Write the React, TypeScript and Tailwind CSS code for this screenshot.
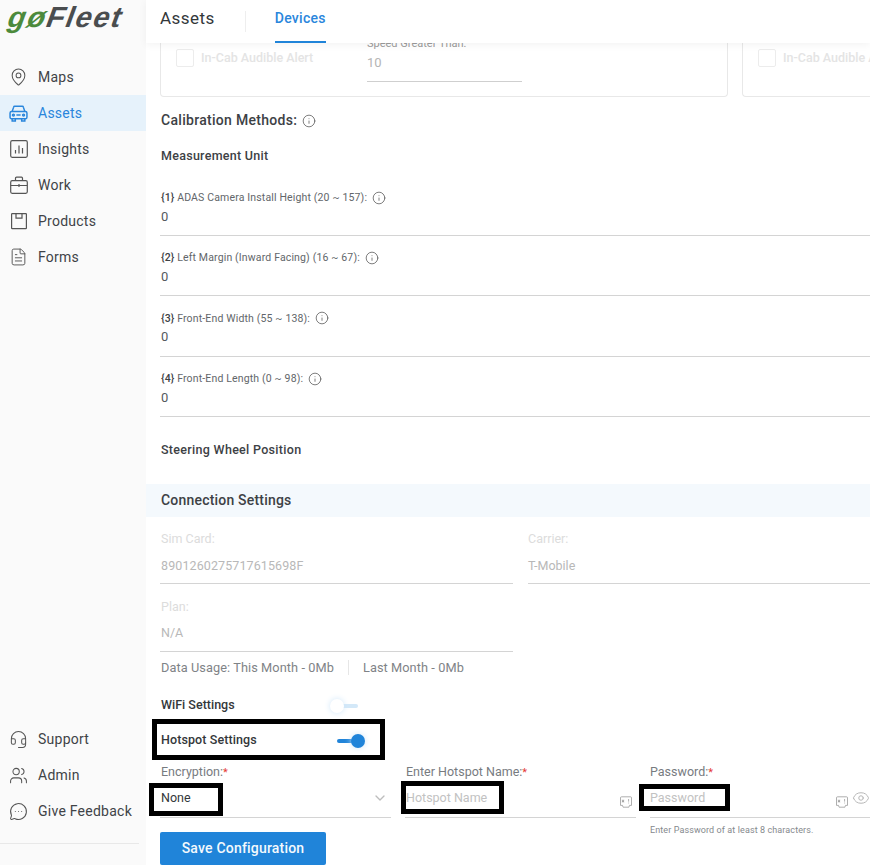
import { ChevronDown, Eye, FileText, Headset, Info, MapPin, MessageCircleMore, Users } from "lucide-react";
import type { ReactNode } from "react";

const CarIcon = () => (
  <svg width="19" height="19" viewBox="0 0 18 18" fill="none" stroke="currentColor" strokeWidth="1.4">
    <path d="M3 7l1.4-4a1 1 0 0 1 1-.8h7.2a1 1 0 0 1 1 .8L15 7" />
    <rect x="1" y="7" width="16" height="7" rx="1.5" />
    <path d="M3 14v2h3v-2M12 14v2h3v-2M7 10.5h4" />
    <circle cx="4.2" cy="10.5" r=".9" />
    <circle cx="13.8" cy="10.5" r=".9" />
  </svg>
);

const InsightsIcon = () => (
  <svg width="18" height="18" viewBox="0 0 18 18" fill="none" stroke="currentColor" strokeWidth="1.2">
    <rect x=".7" y=".7" width="16.6" height="16.6" rx="1.5" />
    <path d="M5.5 10v3.5M9 5.5v8M12.5 8v5.5" />
  </svg>
);

const WorkIcon = () => (
  <svg width="18" height="18" viewBox="0 0 18 18" fill="none" stroke="currentColor" strokeWidth="1.2">
    <rect x=".7" y="4.7" width="16.6" height="12.6" rx="1.5" />
    <path d="M5.5 4.7V2.2a1 1 0 0 1 1-1h5a1 1 0 0 1 1 1v2.5M.7 9.5h16.6M9 8v3" />
  </svg>
);

const ProductsIcon = () => (
  <svg width="18" height="18" viewBox="0 0 18 18" fill="none" stroke="currentColor" strokeWidth="1.2">
    <rect x="1.6" y="1.6" width="14.8" height="15" rx=".6" />
    <path d="M6 1.6v4.6h6V1.6" />
  </svg>
);

const navTop = [
  { label: "Maps", icon: <MapPin size={20} strokeWidth={1.3} /> },
  { label: "Assets", icon: <CarIcon />, active: true },
  { label: "Insights", icon: <InsightsIcon /> },
  { label: "Work", icon: <WorkIcon /> },
  { label: "Products", icon: <ProductsIcon /> },
  { label: "Forms", icon: <FileText size={20} strokeWidth={1.2} /> },
];

const navBottom = [
  { label: "Support", icon: <Headset size={19} strokeWidth={1.3} /> },
  { label: "Admin", icon: <Users size={19} strokeWidth={1.3} /> },
  { label: "Give Feedback", icon: <MessageCircleMore size={19} strokeWidth={1.3} /> },
];

const calibration = [
  { key: "{1}", label: "ADAS Camera Install Height (20 ~ 157):" },
  { key: "{2}", label: "Left Margin (Inward Facing) (16 ~ 67):" },
  { key: "{3}", label: "Front-End Width (55 ~ 138):" },
  { key: "{4}", label: "Front-End Length (0 ~ 98):" },
];

const NavItem = ({ label, icon, active }: { label: string; icon: ReactNode; active?: boolean }) => (
  <div
    className={`flex h-9 items-center gap-[10px] pl-[9px] text-[14px] tracking-[0.25px] ${
      active ? "bg-[#e6f2fb] text-[#2a86dc]" : "text-[#3f4347]"
    }`}
  >
    <span className={`flex w-[19px] justify-center ${active ? "" : "text-[#555]"}`}>{icon}</span>
    {label}
  </div>
);

const Star = () => <span className="text-[11px] text-[#e53935]">*</span>;

const AutofillIcon = () => (
  <svg width="12" height="12" viewBox="0 0 12 12" fill="none" className="text-[#9a9a9a]">
    <path
      d="M1.5 .8h9a1 1 0 0 1 1 1v7.6h-2l-.6 1.8H3.1l-.6-1.8H.5V1.8a1 1 0 0 1 1-1z"
      stroke="currentColor"
      strokeWidth="0.8"
    />
    <path d="M3 3.6v3M1.8 4.3l2.4 1.6M4.2 4.3L1.8 5.9M8.6 3v2.6M8.6 6.6v.8" stroke="currentColor" strokeWidth="0.8" />
  </svg>
);

const Toggle = ({ on }: { on?: boolean }) => (
  <span className="relative block h-[4px] w-[21px]">
    <span className={`absolute inset-0 rounded-full ${on ? "bg-[#2084d9]" : "bg-[#d3e8f8]"}`} />
    <span
      className={`absolute top-[-5px] h-[14px] w-[14px] rounded-full ${
        on ? "right-[-7px] bg-[#2084d9] shadow-[0_0_6px_#cfe6f8]" : "left-[-7px] bg-white shadow-[0_0_6px_#cfe6f8]"
      }`}
    />
  </span>
);

const DisabledCheck = () => (
  <div className="flex items-center gap-[7px] whitespace-nowrap">
    <span className="h-[18px] w-[18px] shrink-0 rounded-[2px] border border-[#ececec]" />
    <span className="text-[12.5px] font-medium text-[#e4e4e4]">In-Cab Audible Alert</span>
  </div>
);

export default function App() {
  return (
    <div className="flex h-[865px] w-[870px] overflow-hidden bg-white font-['Roboto',sans-serif]">
      <aside className="flex w-[146px] shrink-0 flex-col bg-[#fafafa]">
        <div className="flex h-[59px] items-start pl-[9px]">
          <span className="-mt-px -skew-x-[20deg] font-['Liberation_Sans',sans-serif] text-[29px] leading-[36px] font-bold tracking-[1.6px]">
            <span className="text-[#4c8a3c]">gø</span>
            <span className="text-[#4a4d4f]">Fleet</span>
          </span>
        </div>
        {navTop.map((n) => (
          <NavItem key={n.label} {...n} />
        ))}
        <div className="mt-auto">
          {navBottom.map((n) => (
            <NavItem key={n.label} {...n} />
          ))}
          <div className="mt-[14px] mb-[21px] mr-[7px] border-t border-[#e8e8e8]" />
        </div>
      </aside>

      <main className="relative flex min-w-0 flex-1 flex-col">
        <header className="relative z-10 flex h-[43px] shrink-0 items-center bg-white pl-[14px] shadow-[0_2px_8px_rgba(0,0,0,0.05)]">
          <h1 className="pb-[5px] text-[17px] font-normal tracking-[0.45px] text-[#33373a]">Assets</h1>
          <span className="ml-[30px] h-[21px] border-l border-[#eeeeee]" />
          <div className="ml-[29px] flex h-full items-center border-b-[2px] border-[#2084d9] pb-[4px] text-[14px] font-medium tracking-[0.3px] text-[#2a86dc]">
            Devices
          </div>
        </header>

        <div className="flex-1 overflow-hidden">
          {/* cards scrolled mostly out of view */}
          <div className="flex gap-[14px] pl-[14px]">
            <div className="flex h-[54px] w-[568px] shrink-0 rounded-b-[4px] border border-t-0 border-[#e8e8e8] pl-[15px]">
              <div className="w-[191px] pt-[6px]">
                <DisabledCheck />
              </div>
              <div className="relative h-[39px] w-[155px] border-b border-[#cfcfcf]">
                <span className="absolute -top-[4px] left-0 text-[11px] leading-[10px] whitespace-nowrap text-[#9b9b9b]">Speed Greater Than:</span>
                <span className="absolute top-[12px] left-0 text-[13px] leading-[16px] text-[#b5b5b5]">10</span>
              </div>
            </div>
            <div className="h-[54px] min-w-0 flex-1 overflow-hidden rounded-bl-[4px] border-b border-l border-[#e8e8e8] pl-[15px] pt-[6px]">
              <DisabledCheck />
            </div>
          </div>

          <div className="pl-[14px]">
            <div className="mt-[14px] ml-px flex h-[19px] items-center gap-[5px] text-[14px] font-medium tracking-[0.3px] text-[#3d4145]">
              Calibration Methods:
              <Info size={14} strokeWidth={1.3} className="text-[#555]" />
            </div>
            <div className="mt-[18px] ml-px h-[15px] text-[12.5px] leading-[15px] font-medium tracking-[0.27px] text-[#3d4145]">Measurement Unit</div>

            <div className="mt-[27.8px]">
              {calibration.map((row) => (
                <div key={row.key} className="mb-[15px] h-[45.33px] border-b border-[#d4d4d4]">
                  <div className="ml-px flex h-[14px] items-center gap-[5px] text-[10.5px] tracking-[0.15px] text-[#62666a]">
                    <span>
                      <span className="font-medium text-[#3d4145]">{row.key}</span> {row.label}
                    </span>
                    <Info size={14} strokeWidth={1.3} className="text-[#555]" />
                  </div>
                  <div className="mt-[4px] ml-px text-[13px] leading-[16px] text-[#55595d]">0</div>
                </div>
              ))}
            </div>

            <div className="mt-[25.2px] ml-px h-[15px] text-[12.5px] leading-[15px] font-medium tracking-[0.3px] text-[#3d4145]">Steering Wheel Position</div>
          </div>

          <div className="mt-[27px] flex h-[33px] items-center bg-[#f4f9fd] pl-[15px] text-[14px] font-medium tracking-[0.2px] text-[#3d4145]">
            Connection Settings
          </div>

          <div className="pl-[14px]">
            <div className="mt-[14px] flex gap-[15px]">
              <div className="h-[53px] w-[353px] border-b border-[#d4d4d4] pl-px">
                <div className="text-[12.5px] leading-[15px] text-[#dcdcdc]">Sim Card:</div>
                <div className="mt-[12px] text-[12.5px] leading-[15px] tracking-[0.1px] text-[#b8b8b8]">8901260275717615698F</div>
              </div>
              <div className="h-[53px] flex-1 border-b border-[#d4d4d4]">
                <div className="text-[12.5px] leading-[15px] text-[#dcdcdc]">Carrier:</div>
                <div className="mt-[12px] text-[12.5px] leading-[15px] text-[#b8b8b8]">T-Mobile</div>
              </div>
            </div>
            <div className="mt-[15px] h-[53px] w-[353px] border-b border-[#d4d4d4] pl-px">
              <div className="text-[12.5px] leading-[15px] text-[#dcdcdc]">Plan:</div>
              <div className="mt-[11px] text-[12.5px] leading-[15px] text-[#b8b8b8]">N/A</div>
            </div>
            <div className="mt-[8px] ml-px flex h-[15px] items-center text-[12.75px] tracking-[0.08px] text-[#7f8387]">
              Data Usage: This Month - 0Mb
              <span className="mx-[14px] h-[15px] border-l border-[#e6e6e6]" />
              Last Month - 0Mb
            </div>

            <div className="mt-[23px] ml-px flex h-[15px] w-[197px] items-center justify-between text-[12.5px] font-medium text-[#33373a]">
              WiFi Settings
              <Toggle />
            </div>
            <div className="mt-[20px] ml-px flex h-[15px] w-[197px] items-center justify-between text-[12.5px] font-medium tracking-[0.1px] text-[#33373a]">
              Hotspot Settings
              <Toggle on />
            </div>

            <div className="mt-[16px] flex gap-[14px]">
              <div className="h-[54px] w-[231px] border-b border-[#d4d4d4] pl-px">
                <div className="text-[12.5px] leading-[15px] text-[#777b7f]">
                  Encryption:
                  <Star />
                </div>
                <div className="mt-[10px] flex h-[15px] items-center justify-between pr-[3px] text-[12.5px] leading-[15px] text-[#33373a]">
                  None
                  <ChevronDown size={16} strokeWidth={2} className="text-[#bdbdbd]" />
                </div>
              </div>
              <div className="h-[54px] w-[231px] border-b border-[#d4d4d4] pl-px">
                <div className="text-[12.5px] leading-[15px] text-[#777b7f]">
                  Enter Hotspot Name:
                  <Star />
                </div>
                <div className="mt-[10px] flex h-[15px] items-center justify-between pr-[4px] text-[12.5px] leading-[15px] text-[#c2c2c2]">
                  Hotspot Name
                  <span className="mt-[8px]">
                    <AutofillIcon />
                  </span>
                </div>
              </div>
              <div className="min-w-0 flex-1">
                <div className="h-[54px] border-b border-[#d4d4d4]">
                  <div className="text-[12.5px] leading-[15px] text-[#777b7f]">
                    Password:
                    <Star />
                  </div>
                  <div className="mt-[10px] flex h-[15px] items-center text-[12.5px] leading-[15px] text-[#c2c2c2]">
                    Password
                    <span className="mt-[8px] ml-auto">
                      <AutofillIcon />
                    </span>
                    <Eye size={18} strokeWidth={1.3} className="ml-[4px] text-[#b5b5b5]" />
                  </div>
                </div>
                <div className="mt-[7px] -mb-[4px] text-[9px] leading-[11px] tracking-[0.1px] text-[#85898d]">Enter Password of at least 8 characters.</div>
              </div>
            </div>

            <button className="flex h-[33px] w-[166px] items-center justify-center rounded-[2px] bg-[#2084d9] text-[14px] font-medium tracking-[0.2px] text-[#f4f9fd]">
              Save Configuration
            </button>
          </div>
        </div>

        {/* black annotation boxes drawn over the screenshot */}
        <div className="absolute top-[719px] left-[6px] h-[41px] w-[233px] border-[5px] border-black" />
        <div className="absolute top-[783px] left-[3px] h-[33px] w-[74px] border-[5px] border-black" />
        <div className="absolute top-[781px] left-[255px] h-[33px] w-[103px] border-[5px] border-black" />
        <div className="absolute top-[784px] left-[493px] h-[27px] w-[91px] border-[5px] border-black" />
      </main>
    </div>
  );
}
